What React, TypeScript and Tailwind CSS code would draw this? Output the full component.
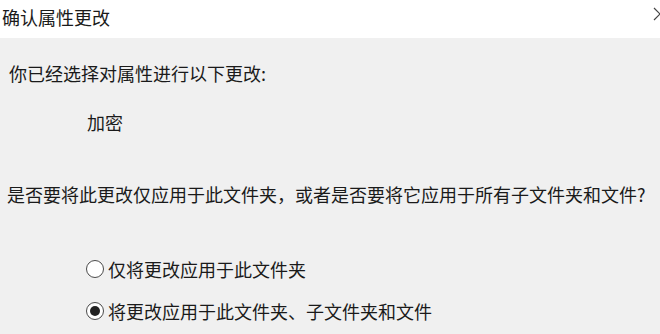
import { useState } from "react"

const FONT = { fontFamily: '"Microsoft YaHei", "Noto Sans CJK SC", "Noto Sans", sans-serif' }

function Radio({
  label,
  checked,
  onSelect,
}: {
  label: string
  checked: boolean
  onSelect: () => void
}) {
  return (
    <button onClick={onSelect} className="flex items-center gap-[4px] text-left">
      <span className="flex h-[18px] w-[18px] shrink-0 items-center justify-center rounded-full border-[1.5px] border-[#4a4a4a] bg-white">
        {checked && <span className="h-[10px] w-[10px] rounded-full bg-[#222]" />}
      </span>
      <span className="text-[18px] leading-[24px] text-[#1a1a1a]">{label}</span>
    </button>
  )
}

export default function App() {
  const [scope, setScope] = useState<"folder" | "all">("all")

  return (
    <div className="h-[334px] w-[660px] overflow-hidden bg-[#f0f0f0]" style={FONT}>
      {/* title bar — close button is cut off by the window edge */}
      <div className="flex h-[38px] items-start justify-between bg-white pl-[2px] pt-[5px]">
        <span className="text-[18px] leading-[24px] text-[#1a1a1a]">确认属性更改</span>
        <svg width="14" height="14" viewBox="0 0 14 14" className="mr-[-7px] mt-[2px] shrink-0" aria-label="关闭">
          <path d="M1 1 L13 13 M13 1 L1 13" stroke="#444" strokeWidth="1.2" fill="none" />
        </svg>
      </div>

      {/* body */}
      <div className="flex flex-col">
        <p className="mt-[23px] pl-[9px] text-[18px] leading-[24px] text-[#1a1a1a]">
          你已经选择对属性进行以下更改:
        </p>
        <p className="mt-[25px] pl-[87px] text-[18px] leading-[24px] text-[#1a1a1a]">加密</p>
        <p className="mt-[48px] whitespace-nowrap pl-[7px] text-[18px] leading-[24px] text-[#1a1a1a]">
          是否要将此更改仅应用于此文件夹，或者是否要将它应用于所有子文件夹和文件?
        </p>
        <div className="mt-[51px] flex flex-col gap-[18px] pl-[86px]">
          <Radio label="仅将更改应用于此文件夹" checked={scope === "folder"} onSelect={() => setScope("folder")} />
          <Radio label="将更改应用于此文件夹、子文件夹和文件" checked={scope === "all"} onSelect={() => setScope("all")} />
        </div>
      </div>
    </div>
  )
}
